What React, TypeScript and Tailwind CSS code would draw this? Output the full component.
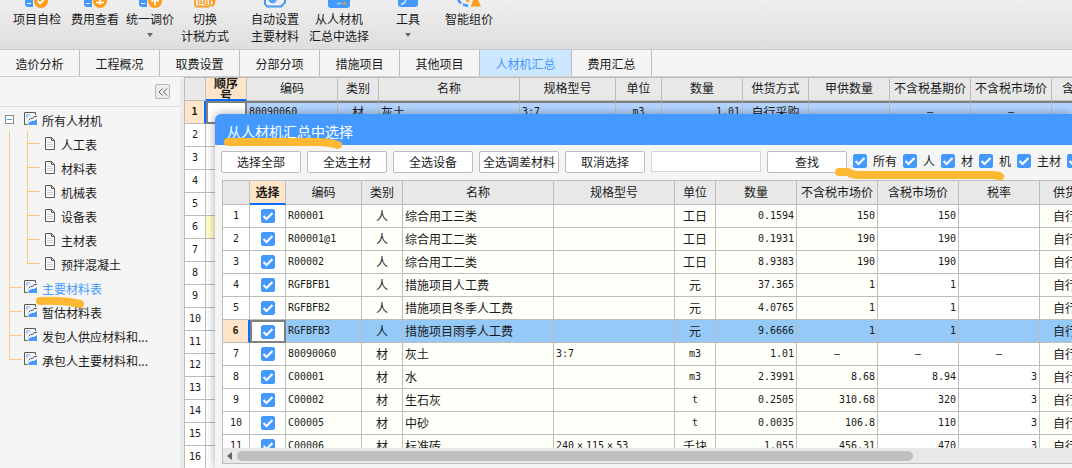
import { Fragment, useState, type ReactNode } from "react"
import clsx from "clsx"

type Align = "left" | "center" | "right"
type Column = { title: string; width: string; align: Align; editable?: boolean }
type Tool = { lines: string[]; gap: string; menu?: boolean; icon: ReactNode }

const BLUE = "#4499ff"
const ORANGE = "#ff9c1a"

const TOOLS: Tool[] = [
  {
    lines: ["项目自检"], gap: "ml-[13px]",
    icon: <><path d="M0 0h8v7H3a3 3 0 0 1-3-3z" fill={BLUE} /><path d="M2 3.500h4" stroke="#fff" /><circle cx="16" cy="1" r="7" fill={ORANGE} /><path d="M12.500 0.500 15 3.500 20 -1.500" stroke="#fff" strokeWidth="1.800" fill="none" /></>,
  },
  {
    lines: ["费用查看"], gap: "ml-[10px]",
    icon: <><path d="M1 0h8v7H4a3 3 0 0 1-3-3z" fill={BLUE} /><path d="M3 3.500h4" stroke="#fff" /><circle cx="17" cy="1" r="7" fill={ORANGE} /><path d="M13 2.500h8M17 0v5" stroke="#fff" strokeWidth="1.600" /></>,
  },
  {
    lines: ["统一调价"], gap: "ml-[7px]", menu: true,
    icon: <><path d="M1 0h8v7H4a3 3 0 0 1-3-3z" fill={BLUE} /><path d="M3 3.500h4" stroke="#fff" /><circle cx="17" cy="1" r="7" fill={ORANGE} /><path d="M17 0v5.500M13.500 1.500 17 -1l3.500 2.500" stroke="#fff" strokeWidth="1.800" fill="none" /></>,
  },
  {
    lines: ["切换", "计税方式"], gap: "ml-[7px]",
    icon: <><path d="M2 0v4.500a2 2 0 0 0 2 2h11a2 2 0 0 0 2-2V0" stroke={ORANGE} strokeWidth="1.800" fill="none" /><path d="M5.500 0v5M14 0v4.500h-2M8 0v3.500h3.500V0M8 1.500h3.500" stroke={ORANGE} strokeWidth="1.200" fill="none" /><path d="M19 6.500c1.500-1.500 2.500-3.500 2.500-6h-3" stroke={ORANGE} strokeWidth="2.200" fill="none" /></>,
  },
  {
    lines: ["自动设置", "主要材料"], gap: "ml-[22px]",
    icon: <><path d="M2 0v4l2 2.500h14l4-4V0" stroke={BLUE} strokeWidth="2" fill="none" /><path d="M6.500 0a3.500 3.500 0 0 0 6.500 0M8.500 0h2.500" stroke={BLUE} strokeWidth="2" fill="none" /></>,
  },
  {
    lines: ["从人材机", "汇总中选择"], gap: "ml-[10px]",
    icon: <><path d="M1 0h22v5a3 3 0 0 1-3 3H4a3 3 0 0 1-3-3z" fill={BLUE} /><path d="M10 3.500h4" stroke="#a9d0ff" strokeWidth="1.600" /><path d="M15.500 3.500h4" stroke={ORANGE} strokeWidth="1.800" /></>,
  },
  {
    lines: ["工具"], gap: "ml-[27px]", menu: true,
    icon: <><path d="M2 0h20v4a3 3 0 0 1-3 3H5a3 3 0 0 1-3-3z" fill={BLUE} /><path d="M5 4.500q4-1 5-4.500" stroke="#cfe4ff" strokeWidth="1.500" fill="none" /></>,
  },
  {
    lines: ["智能组价"], gap: "ml-[25px]",
    icon: <><path d="M1 0 4 3.500M6 4.500l5 1.500" stroke={BLUE} strokeWidth="2.500" fill="none" /><path d="M9 0l3 1.500" stroke={ORANGE} strokeWidth="2" /><path d="M16 0h5l3 6.500H14z" fill={ORANGE} /></>,
  },
]

const TABS = ["造价分析", "工程概况", "取费设置", "分部分项", "措施项目", "其他项目", "人材机汇总", "费用汇总"]
const MATERIAL_TABLES = ["人工表", "材料表", "机械表", "设备表", "主材表", "预拌混凝土"]
const REPORTS = ["主要材料表", "暂估材料表", "发包人供应材料和...", "承包人主要材料和..."]

const SUMMARY_COLUMNS: Column[] = [
  { title: "编码", width: "w-[91px]", align: "left" },
  { title: "类别", width: "w-[41px]", align: "center" },
  { title: "名称", width: "w-[141px]", align: "left" },
  { title: "规格型号", width: "w-[96px]", align: "left" },
  { title: "单位", width: "w-[46px]", align: "center" },
  { title: "数量", width: "w-[81px]", align: "right" },
  { title: "供货方式", width: "w-[66px]", align: "center" },
  { title: "甲供数量", width: "w-[81px]", align: "right" },
  { title: "不含税基期价", width: "w-[81px]", align: "right" },
  { title: "不含税市场价", width: "w-[81px]", align: "right" },
  { title: "含税市场价", width: "w-[81px]", align: "right" },
]
const SUMMARY_ROW = ["80090060", "材", "灰土", "3:7", "m3", "1.01", "自行采购", "", "–", "–", "–"]

const PICK_COLUMNS: Column[] = [
  { title: "编码", width: "w-[76px]", align: "left" },
  { title: "类别", width: "w-[41px]", align: "center" },
  { title: "名称", width: "w-[151px]", align: "left" },
  { title: "规格型号", width: "w-[121px]", align: "left" },
  { title: "单位", width: "w-[41px]", align: "center" },
  { title: "数量", width: "w-[81px]", align: "right" },
  { title: "不含税市场价", width: "w-[81px]", align: "right" },
  { title: "含税市场价", width: "w-[81px]", align: "right", editable: true },
  { title: "税率", width: "w-[81px]", align: "right", editable: true },
  { title: "供货方式", width: "w-[75px]", align: "center" },
]
const PICK_ROWS = [
  ["R00001", "人", "综合用工三类", "", "工日", "0.1594", "150", "150", "", "自行采购"],
  ["R00001@1", "人", "综合用工二类", "", "工日", "0.1931", "190", "190", "", "自行采购"],
  ["R00002", "人", "综合用工二类", "", "工日", "8.9383", "190", "190", "", "自行采购"],
  ["RGFBFB1", "人", "措施项目人工费", "", "元", "37.365", "1", "1", "", "自行采购"],
  ["RGFBFB2", "人", "措施项目冬季人工费", "", "元", "4.0765", "1", "1", "", "自行采购"],
  ["RGFBFB3", "人", "措施项目雨季人工费", "", "元", "9.6666", "1", "1", "", "自行采购"],
  ["80090060", "材", "灰土", "3:7", "m3", "1.01", "–", "–", "–", "自行采购"],
  ["C00001", "材", "水", "", "m3", "2.3991", "8.68", "8.94", "3", "自行采购"],
  ["C00002", "材", "生石灰", "", "t", "0.2505", "310.68", "320", "3", "自行采购"],
  ["C00005", "材", "中砂", "", "t", "0.0035", "106.8", "110", "3", "自行采购"],
  ["C00006", "材", "标准砖", "240×115×53", "千块", "1.055", "456.31", "470", "3", "自行采购"],
]

const MONO = "block font-['DejaVu_Sans_Mono',monospace] text-[10px]"
const HEAD = "border-r border-b border-[#bdbdbd] bg-[#e8e8e8] p-0 pb-0.5 font-normal leading-[18px]"
const CELL = "h-[23px] overflow-hidden border-r border-b border-[#bdbdbd] p-0 leading-[22px] whitespace-nowrap"
const ALIGN: Record<Align, string> = {
  left: "pl-0.5 text-left",
  center: "text-center",
  right: "pr-0.5 text-right",
}

function CellText({ value }: { value: string }) {
  if (!/^[\x20-\x7e×–]+$/.test(value)) return <>{value}</>
  // the multiplication sign takes a full-width cell
  return (
    <span className={MONO}>
      {value.split("×").map((part, i) => (
        <Fragment key={i}>
          {i > 0 && <span className="inline-block w-3 text-center">×</span>}
          {part}
        </Fragment>
      ))}
    </span>
  )
}

function Check({ label, hideLabel }: { label: string; hideLabel?: boolean }) {
  const [on, setOn] = useState(true)
  return (
    <label className="inline-flex shrink-0 items-center gap-1.5 align-middle">
      <span className="grid size-3.5">
        <input
          type="checkbox"
          checked={on}
          onChange={() => setOn(!on)}
          aria-label={label}
          className="size-3.5 appearance-none rounded-xs border border-[#bdbdbd] bg-white [grid-area:1/1] checked:border-[#4499ff] checked:bg-[#4499ff]"
        />
        {on && (
          <svg viewBox="0 0 14 14" className="pointer-events-none size-3.5 [grid-area:1/1]" fill="none" stroke="#fff" strokeWidth="2">
            <path d="M2.500 7 5.500 10 11.500 4" />
          </svg>
        )}
      </span>
      {!hideLabel && <span>{label}</span>}
    </label>
  )
}

function ReportIcon() {
  return (
    <svg viewBox="0 0 14 14" className="h-3.5 w-3.5 shrink-0" fill="none">
      <path d="M11.500 3V0.500h-11v12h3" stroke="#5a5a5a" />
      <path d="M2 2h4v2H4v2H2z" fill="#a8d0ff" />
      <path d="M4.500 8.500 6.500 6.500h2l1.500-2h3" stroke="#5a5a5a" />
      <path d="M4.500 13v-2.500L8 9h2l3-2v6z" fill={BLUE} />
    </svg>
  )
}

function PageIcon() {
  return (
    <svg viewBox="0 0 10 13" className="h-[13px] w-2.5 shrink-0" fill="none">
      <path d="M0.500 0.500h6l3 3v9h-9z" fill="#fff" stroke="#555" />
      <path d="M6.500 0.500v3h3" stroke="#555" />
      <path d="M2 5.500h5M2 7.500h6M2 9.500h6" stroke="#ccc" />
    </svg>
  )
}

function Branch({ last }: { last?: boolean }) {
  return (
    <span className="flex w-[13px] shrink-0 flex-col">
      <span className="h-[13px] border-b border-l border-[#fcc981]" />
      {!last && <span className="h-[11px] border-l border-[#fcc981]" />}
    </span>
  )
}

function Toolbar() {
  return (
    <header className="flex h-[50px] shrink-0 items-start overflow-hidden border-b border-[#c8c8c8] bg-linear-to-b from-[#efefef] to-[#dedede]">
      {TOOLS.map(tool => (
        <button key={tool.lines[0]} className={clsx("flex shrink-0 flex-col items-center leading-[17px]", tool.gap)}>
          <svg viewBox="0 0 24 8" className="mb-0.5 h-2 w-6">{tool.icon}</svg>
          {tool.lines.map(line => <span key={line}>{line}</span>)}
          {tool.menu && <svg viewBox="0 0 6 4" className="mt-1.5 h-1 w-1.5"><path d="M0 0h6L3 4z" fill="#666" /></svg>}
        </button>
      ))}
    </header>
  )
}

function Tabs() {
  const [active, setActive] = useState("人材机汇总")
  return (
    <nav className="flex h-[27px] shrink-0 border-b border-[#cfcfcf] bg-[#f5f5f5]">
      {TABS.map(tab => (
        <button
          key={tab}
          onClick={() => setActive(tab)}
          className={clsx(
            "border-r border-[#bdbdbd] pt-0.5",
            tab.length > 4 ? "w-[92px]" : "w-20",
            tab === active && "bg-[#cce7ff] text-[#4499ff]",
          )}
        >
          {tab}
        </button>
      ))}
    </nav>
  )
}

function Sidebar() {
  return (
    <aside className="w-[184px] shrink-0 border-r-4 border-[#ececec] bg-[#f5f5f5]">
      <div className="flex h-[30px] items-center justify-end border-b border-[#dedede] pr-2.5">
        <button aria-label="收起" className="flex size-[15px] items-center justify-center rounded-xs border border-[#b5b5b5] bg-[#ececec]">
          <svg viewBox="0 0 10 8" className="h-2 w-2.5" fill="none" stroke="#666"><path d="M4.500 0.500 1 4l3.500 3.500M9 0.500 5.500 4 9 7.500" /></svg>
        </button>
      </div>
      <ul>
        <li className="flex h-6 items-center pl-[5px]">
          <button aria-label="折叠" className="flex size-[9px] items-center justify-center border border-[#8a8a8a] bg-white">
            <span className="h-px w-[5px] bg-[#4499ff]" />
          </button>
          <span className="ml-2.5 flex items-center gap-1"><ReportIcon /><span className="pt-1">所有人材机</span></span>
        </li>
        {MATERIAL_TABLES.map((name, i) => (
          <li key={name} className="flex h-6 pl-[9px]">
            <span className="w-[18px] shrink-0 border-l border-[#fcc981]" />
            <Branch last={i === MATERIAL_TABLES.length - 1} />
            <a href="#" className="ml-[5px] flex items-center gap-1.5"><PageIcon /><span className="pt-1">{name}</span></a>
          </li>
        ))}
        {REPORTS.map((name, i) => (
          <li key={name} className="flex h-6 pl-[9px]">
            <Branch last={i === REPORTS.length - 1} />
            <a href="#" className={clsx("ml-0.5 flex items-center gap-1", i === 0 && "text-[#4499ff]")}>
              <ReportIcon /><span className="pt-1 whitespace-nowrap">{name}</span>
            </a>
          </li>
        ))}
      </ul>
    </aside>
  )
}

function SummaryTable() {
  return (
    <table className="w-[949px] table-fixed border-separate border-spacing-0 border-t border-l border-[#bdbdbd]">
      <thead>
        <tr className="h-[23px]">
          <th className={clsx(HEAD, "w-[21px]")} />
          <th className="w-[41px] border-r border-b-2 border-[#bdbdbd] border-b-[#0a6cff] bg-[#ffe5c8] p-0">
            <div className="flex h-[21px] flex-col items-center justify-center overflow-hidden leading-[12px] font-bold">
              <span>顺序</span><span>号</span>
            </div>
          </th>
          {SUMMARY_COLUMNS.map(col => <th key={col.title} className={clsx(HEAD, col.width)}>{col.title}</th>)}
        </tr>
      </thead>
      <tbody>
        <tr>
          <td className="h-[23px] border-r-2 border-b border-[#bdbdbd] border-r-[#0a6cff] bg-[#ffe5c8] p-0 text-center leading-[22px] font-bold"><CellText value="1" /></td>
          <td className="border-2 border-[#808080] bg-white p-0" />
          {SUMMARY_ROW.map((value, i) => (
            <td key={i} className={clsx("overflow-hidden border-t-2 border-r border-b border-[#bdbdbd] border-t-[#808080] bg-[#b2d4ff] p-0 pb-0.5 leading-[18px] whitespace-nowrap", value === "–" ? "text-center" : ALIGN[SUMMARY_COLUMNS[i].align])}>
              <CellText value={value} />
            </td>
          ))}
        </tr>
        {Array.from({ length: 15 }, (_, i) => i + 2).map(n => (
          <tr key={n}>
            <td className={clsx(CELL, "bg-white text-center")}><CellText value={String(n)} /></td>
            <td className={clsx(CELL, n === 6 ? "bg-[#ffffc8]" : "bg-white")} />
            {SUMMARY_COLUMNS.map(col => <td key={col.title} className={clsx(CELL, "bg-white")} />)}
          </tr>
        ))}
      </tbody>
    </table>
  )
}

function PickTable() {
  const [selected, setSelected] = useState(5)
  return (
    <table className="w-[892px] table-fixed border-separate border-spacing-0">
      <thead>
        <tr className="h-6">
          <th className={clsx(HEAD, "w-[27px]")} />
          <th className="w-9 border-r border-b-2 border-[#bdbdbd] border-b-[#0a6cff] bg-[#ffe5c8] p-0 font-bold">选择</th>
          {PICK_COLUMNS.map(col => <th key={col.title} className={clsx(HEAD, col.width)}>{col.title}</th>)}
        </tr>
      </thead>
      <tbody>
        {PICK_ROWS.map((row, r) => {
          const active = r === selected
          return (
            <tr key={row[0]} onClick={() => setSelected(r)}>
              <td className={clsx(CELL, "text-center", active ? "border-r-2 border-r-[#0a6cff] bg-[#ffe5c8] font-bold" : "bg-white")}>
                <CellText value={String(r + 1)} />
              </td>
              <td className={clsx("bg-white p-0 text-center leading-[0]", active ? "border-2 border-[#808080]" : "border-r border-b border-[#bdbdbd]")}>
                <Check label={`选择 ${row[0]}`} hideLabel />
              </td>
              {row.map((value, i) => (
                <td
                  key={i}
                  className={clsx(
                    CELL,
                    value === "–" ? "text-center" : ALIGN[PICK_COLUMNS[i].align],
                    active ? "bg-[#94c9f8]" : PICK_COLUMNS[i].editable ? "bg-white" : "bg-[#fffff9]",
                  )}
                >
                  <CellText value={value} />
                </td>
              ))}
            </tr>
          )
        })}
      </tbody>
    </table>
  )
}

function PickDialog() {
  const button = "h-[22px] w-20 shrink-0 rounded-xs border border-[#bdbdbd] bg-white whitespace-nowrap"
  return (
    <section role="dialog" aria-label="从人材机汇总中选择" className="absolute top-[37px] right-0 bottom-0 left-[31px] flex flex-col overflow-hidden rounded-tl-md bg-[#f5f5f5] shadow-[0_0_10px_rgba(0,0,0,0.35)]">
      <h2 className="h-[31px] shrink-0 bg-[#4499ff] pl-3 text-[14px] leading-[34px] text-white">从人材机汇总中选择</h2>
      <div className="flex h-[35px] shrink-0 items-start gap-1.5 overflow-hidden pt-1.5 pl-1.5">
        {["选择全部", "全选主材", "全选设备", "全选调差材料", "取消选择"].map(name => (
          <button key={name} className={button}>{name}</button>
        ))}
        <input aria-label="查找内容" className="h-[21px] w-[110px] shrink-0 border border-[#d5d5d5] bg-white px-1 outline-none" />
        <button className={button}>查找</button>
        <div className="flex h-5 items-center gap-1.5">
          {["所有", "人", "材", "机", "主材", "设备"].map(kind => <Check key={kind} label={kind} />)}
        </div>
      </div>
      <div className="mb-1 ml-[7px] flex min-h-0 flex-1 flex-col border-y border-l border-[#bdbdbd]">
        <div className="min-h-0 flex-1 overflow-hidden"><PickTable /></div>
        <div className="flex h-[15px] shrink-0 items-center bg-[#e8e8e8] pl-1">
          <svg viewBox="0 0 5 8" className="h-2 w-[5px]"><path d="M5 0v8L0 4z" fill="#666" /></svg>
          <div className="ml-[5px] h-2.5 w-4/5 rounded-full bg-[#bfbfbf]" />
        </div>
      </div>
    </section>
  )
}

// highlighter strokes drawn over the window
function Marks() {
  return (
    <svg className="pointer-events-none absolute inset-0 h-full w-full" fill="none" stroke="#ffb833" strokeLinecap="round" strokeLinejoin="round" strokeWidth="8">
      <path d="M228 142H316q12 0 22 3" />
      <path d="M839 172h9q4 3 10 3H990q8 0 10 1.500" />
      <path d="M40 301q22-1 40 3" />
    </svg>
  )
}

export default function App() {
  return (
    <div className="relative flex h-screen flex-col overflow-hidden bg-[#f5f5f5] font-['Noto_Sans_CJK_SC',sans-serif] text-[12px] text-[#1a1a1a]">
      <Toolbar />
      <Tabs />
      <div className="flex min-h-0 flex-1">
        <Sidebar />
        <main className="relative min-w-0 flex-1 overflow-hidden">
          <SummaryTable />
          <PickDialog />
        </main>
      </div>
      <Marks />
    </div>
  )
}
